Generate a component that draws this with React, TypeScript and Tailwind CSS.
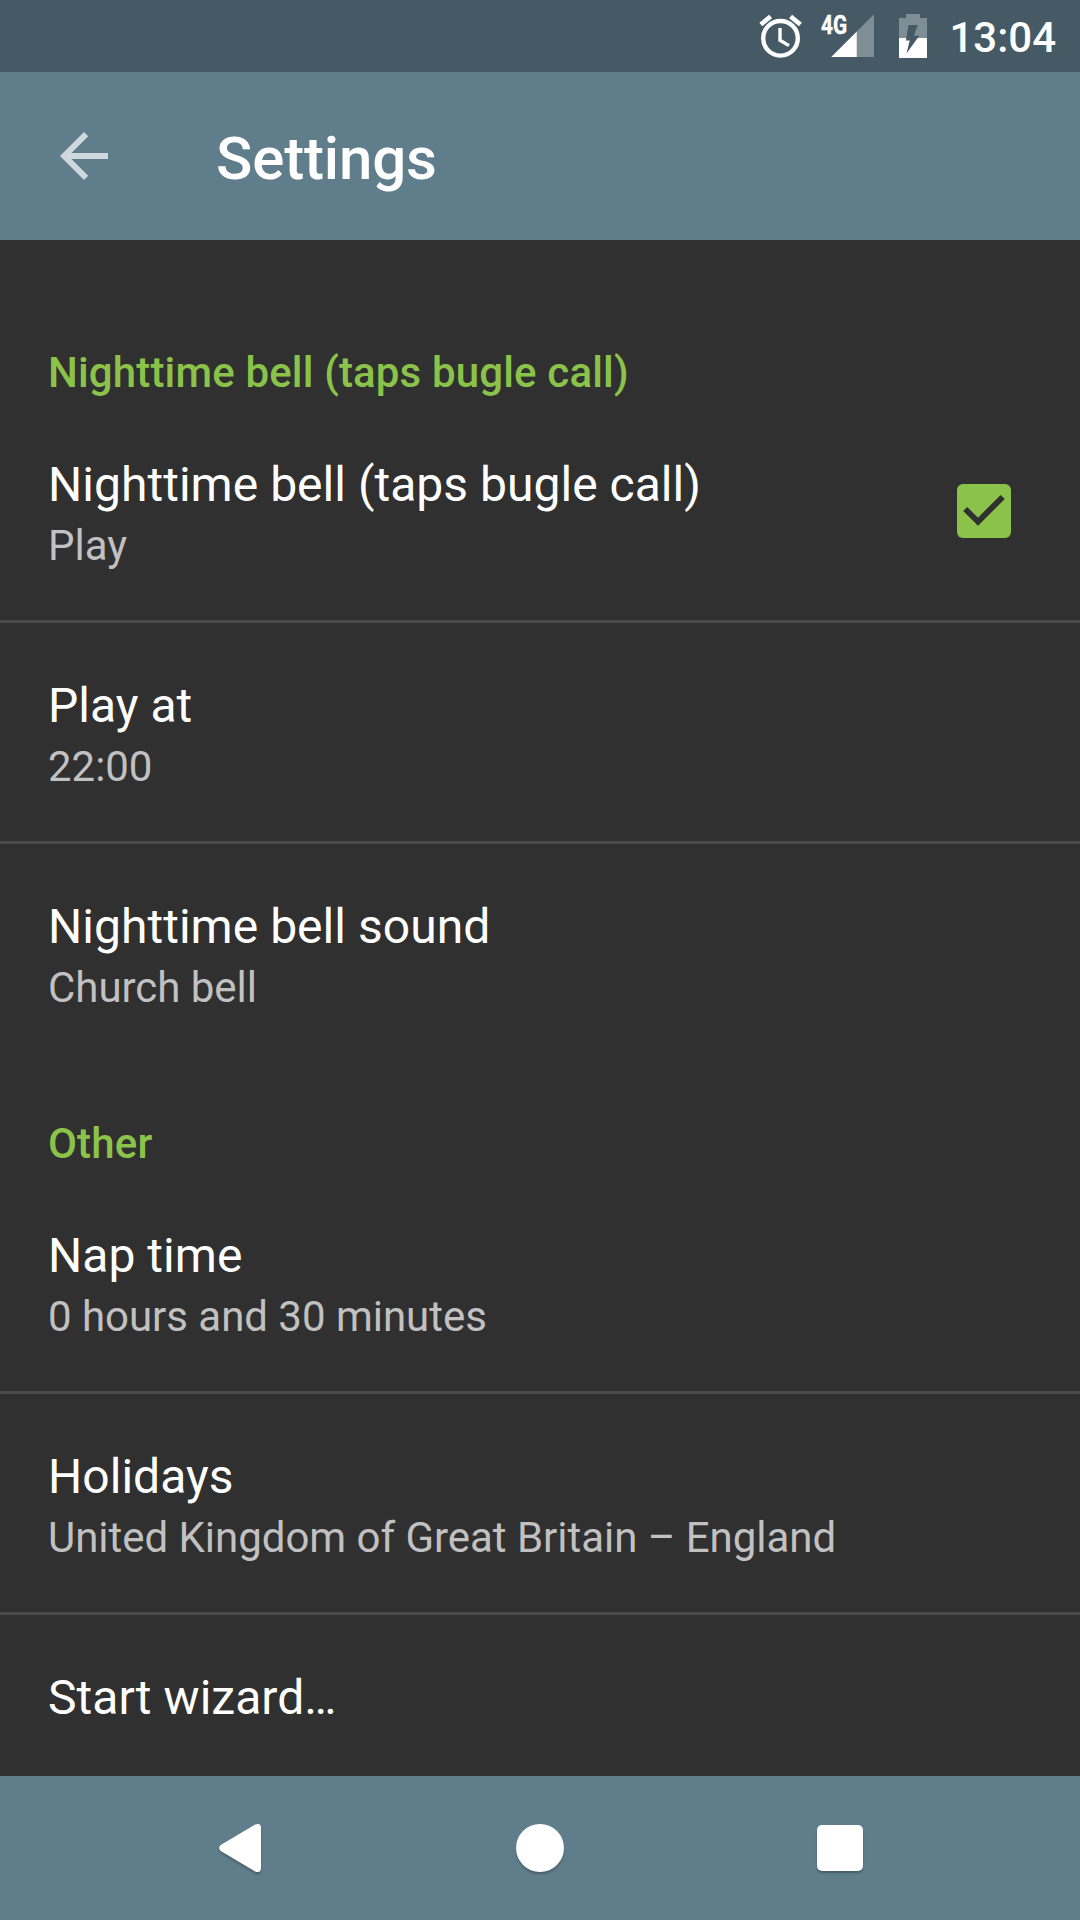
import React from "react";

function Item({ title, sub, className, tight }: { title: string; sub?: string; className?: string; tight?: boolean }) {
  return (
    <div className={"flex flex-col pl-12 " + (tight ? "h-[168px] " : "pt-[50px] h-[218px] ") + (className ?? "")}>
      <div className="h-[64px] pt-[1px] text-[48px] leading-[64px] tracking-[0.03px] text-white whitespace-nowrap">{title}</div>
      {sub && <div className="h-[58px] pt-[1px] text-[42px] leading-[57px] tracking-[-0.03px] text-[#c1c1c1] whitespace-nowrap">{sub}</div>}
    </div>
  );
}

function Heading({ text, className }: { text: string; className: string }) {
  return (
    <div className={"h-[56px] pt-[1px] pl-12 text-[42px] leading-[56px] tracking-[0.16px] font-medium text-[#8bc34a] whitespace-nowrap " + className}>
      {text}
    </div>
  );
}

const Divider = () => <div className="h-[3px] shrink-0 bg-[#4a4a4a]" />;

export default function App() {
  return (
    <div className="flex flex-col w-[1080px] h-[1920px] overflow-hidden bg-[#303030] font-[Roboto,sans-serif]">
      <div className="flex h-[72px] shrink-0 justify-end bg-[#455a64] pr-6 text-white">
        <svg className="w-[180px] h-[72px] shrink-0" viewBox="756 0 180 72">
          <circle cx="780.5" cy="38.3" r="17.3" fill="none" stroke="#fff" strokeWidth="4.4" />
          <path d="M780 28v12.2l9 5.4" fill="none" stroke="#fff" strokeWidth="3.4" />
          <path d="M760.8 24.6l9.8-8.2M800.4 24.6l-9.8-8.2" stroke="#fff" strokeWidth="4.6" />
          <text x="821" y="33.6" fontSize="25.5" fontWeight="700" fill="#fff" stroke="#fff" strokeWidth="0.5" textLength="26" lengthAdjust="spacingAndGlyphs">4G</text>
          <path d="M874 14.3V57h-17.2V31.6z" fill="#7f8e94" />
          <path d="M856.8 31.6V57H831.2z" fill="#fff" />
          <path d="M906 14h14v4h7v20h-28V18h7z" fill="#7f8e94" />
          <path d="M899 38h28v20h-28z" fill="#fff" />
          <path d="M908.5 25h9.3l-4 10.8h5.4L906.5 53.5l3.2-13h-3.8z" fill="#455a64" />
        </svg>
        <span className="ml-[13px] pt-[5px] text-[42px] leading-[66px] font-medium">13:04</span>
      </div>
      <div className="flex h-[168px] shrink-0 items-center bg-[#607d8b] pl-[60px]">
        <svg className="w-[48px] h-[48px]" viewBox="4 4 16 16" fill="#cfd8dc">
          <path d="M20 11H7.83l5.59-5.59L12 4l-8 8 8 8 1.41-1.41L7.83 13H20v-2z" />
        </svg>
        <span className="ml-[108px] pt-[5px] text-[60px] tracking-[-0.15px] font-medium text-white">Settings</span>
      </div>
      <div className="flex flex-col grow">
        <Heading text="Nighttime bell (taps bugle call)" className="mt-[104px]" />
        <div className="mt-[52px] flex justify-between">
          <Item title="Nighttime bell (taps bugle call)" sub="Play" tight />
          <svg className="mt-[32px] mr-[69px] w-[54px] h-[54px]" viewBox="0 0 54 54">
            <rect width="54" height="54" rx="6" fill="#8bc34a" />
            <path d="M8.2 25L21 37.7L45.7 13" fill="none" stroke="#303030" strokeWidth="5.8" />
          </svg>
        </div>
        <Divider />
        <Item title="Play at" sub="22:00" />
        <Divider />
        <Item title="Nighttime bell sound" sub="Church bell" />
        <Heading text="Other" className="mt-[53px]" />
        <Item title="Nap time" sub="0 hours and 30 minutes" tight className="mt-[52px]" />
        <Divider />
        <Item title="Holidays" sub="United Kingdom of Great Britain – England" />
        <Divider />
        <div className="h-[160px] pl-12 pt-[51px] text-[48px] leading-[64px] tracking-[0.03px] text-white">Start wizard…</div>
      </div>
      <div className="flex h-[144px] shrink-0 items-center bg-[#607d8b] pl-[219px]">
        <svg className="w-[42px] h-[48px] drop-shadow-[0_2px_1px_rgba(0,0,0,0.25)]" viewBox="0 0 42 48" fill="#fff">
          <path d="M36.2 .6Q41.8-1.6 42 4V44Q41.8 49.6 36.2 47.4L1.7 27Q-1.5 24 1.7 21z" />
        </svg>
        <div className="ml-[255px] size-12 rounded-full bg-white shadow-[0_2px_2px_rgba(0,0,0,0.25)]" />
        <div className="ml-[253px] size-[46px] rounded-[5px] bg-white shadow-[0_2px_2px_rgba(0,0,0,0.25)]" />
      </div>
    </div>
  );
}
